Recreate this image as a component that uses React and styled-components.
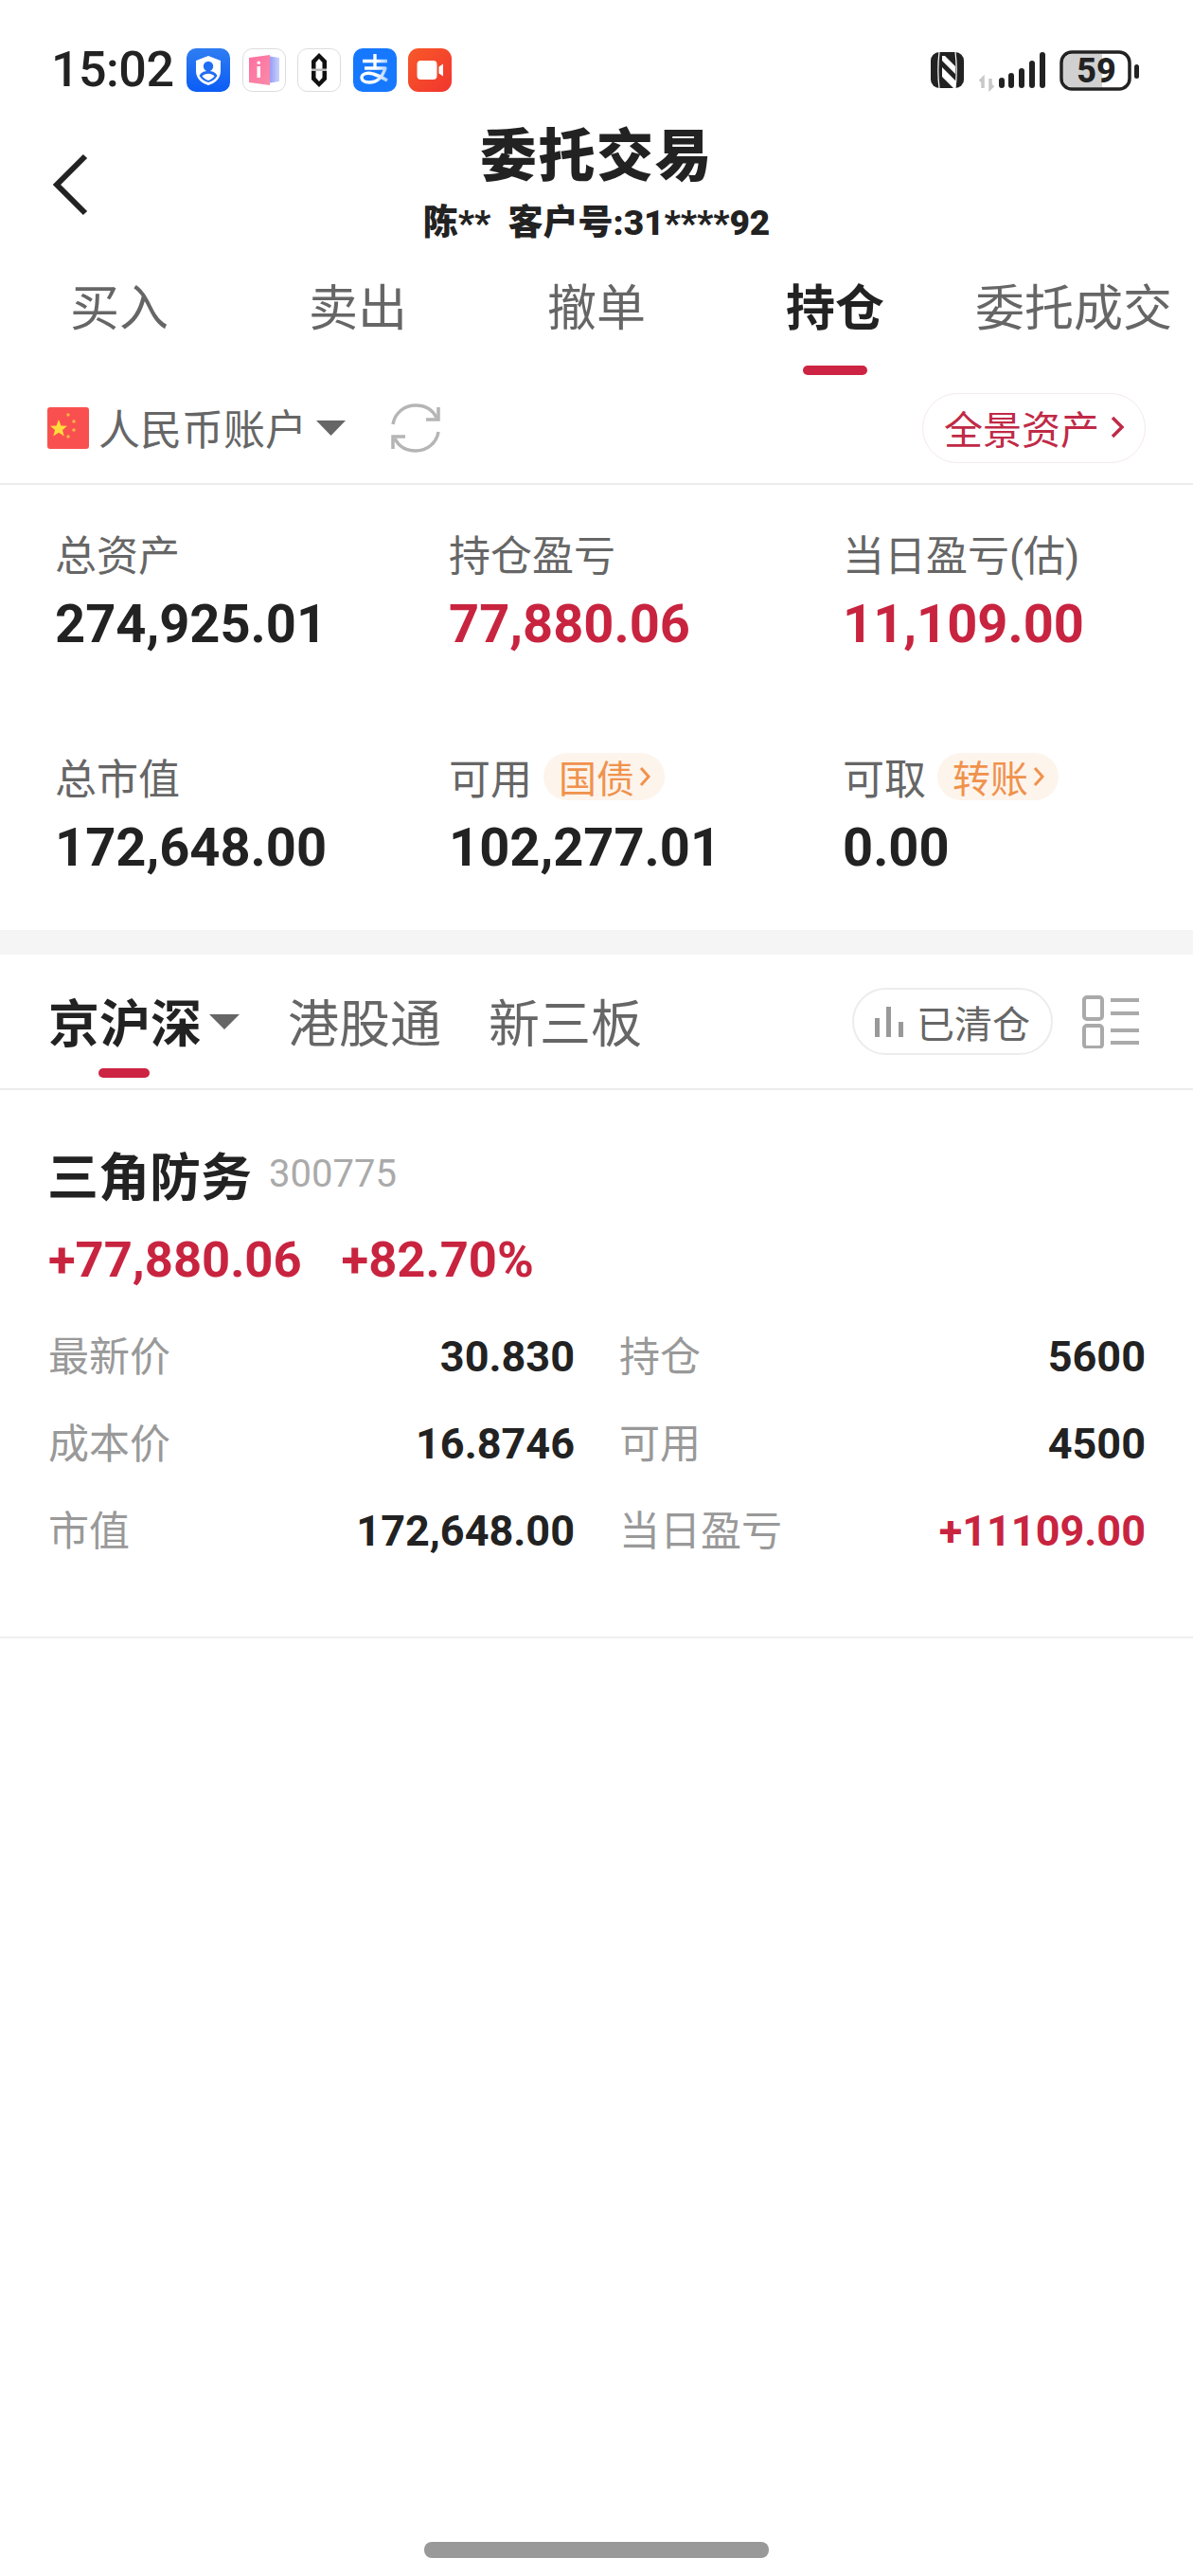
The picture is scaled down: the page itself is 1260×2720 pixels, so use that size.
import React from "react";
import styled, { createGlobalStyle } from "styled-components";

const RED = "#c8243f";
const CJK = `Roboto, "Noto Sans CJK SC", sans-serif`;

const GlobalStyle = createGlobalStyle`
  html, body {
    margin: 0;
    padding: 0;
    background: #fff;
  }
  body {
    font-family: ${CJK};
    color: #222;
  }
  * {
    box-sizing: border-box;
  }
`;

const Page = styled.div`
  width: 1260px;
  height: 2720px;
  display: flex;
  flex-direction: column;
  background: #fff;
  overflow: hidden;
`;

/* status bar */
const StatusBar = styled.div`
  height: 122px;
  padding: 50px 56px 0 54px;
  display: flex;
  align-items: flex-start;
  justify-content: space-between;
`;

const StatusLeft = styled.div`
  display: flex;
  align-items: center;
  height: 47px;
`;

const Time = styled.span`
  font-size: 52px;
  font-weight: 500;
  width: 143px;
  letter-spacing: -0.5px;
  color: #222;
`;

const AppIcons = styled.div`
  display: flex;
  gap: 12.5px;
`;

const AppIcon = styled.svg`
  width: 46px;
  height: 46px;
  display: block;
`;

const StatusGlyphs = styled.svg`
  display: block;
  width: 222px;
  height: 47px;
`;

/* title */
const NavBar = styled.div`
  height: 142px;
  position: relative;
  display: flex;
  flex-direction: column;
  align-items: center;
`;

const BackIcon = styled.svg`
  position: absolute;
  left: 54px;
  top: 40px;
  width: 42px;
  height: 66px;
`;

const Title = styled.div`
  font-size: 60px;
  line-height: 70px;
  margin-top: 9px;
  font-weight: 900;
  letter-spacing: 1.5px;
`;

const SubTitle = styled.div`
  font-size: 37px;
  line-height: 44px;
  margin-top: 13px;
  font-weight: 900;
  white-space: pre;
`;

/* top tabs */
const Tabs = styled.div`
  display: grid;
  grid-template-columns: repeat(5, 252px);
  height: 136px;
  padding-top: 26px;
`;

const Tab = styled.div`
  position: relative;
  text-align: center;
  white-space: nowrap;
  font-size: 52px;
  line-height: 74px;
  font-weight: ${(p) => (p.$active ? 700 : 400)};
  color: ${(p) => (p.$active ? "#222" : "#666")};
`;

const TabLine = styled.span`
  position: absolute;
  left: 50%;
  bottom: 4px;
  width: 68px;
  height: 10px;
  margin-left: -34px;
  border-radius: 5px;
  background: #cc2442;
`;

/* account row */
const AccountRow = styled.div`
  height: 112px;
  padding: 0 50px 6px 50px;
  display: flex;
  align-items: center;
  border-bottom: 2px solid #ececec;
`;

const Flag = styled.svg`
  width: 44px;
  height: 44px;
  margin-right: 10px;
  flex: none;
`;

const AccountName = styled.span`
  font-size: 44px;
  margin-bottom: 3px;
  color: #666;
`;

const Caret = styled.svg`
  display: block;
  width: ${(p) => p.$w}px;
  height: 16px;
  margin-left: ${(p) => p.$ml}px;
  flex: none;
`;

const RefreshIcon = styled.svg`
  width: 52px;
  height: 52px;
  margin-left: 48px;
`;

const AssetPill = styled.div`
  margin-left: auto;
  width: 236px;
  height: 74px;
  padding-bottom: 3px;
  display: flex;
  align-items: center;
  justify-content: center;
  gap: 12px;
  border: 1.5px solid #f5e9eb;
  border-radius: 37px;
  font-size: 41px;
  color: #c02a47;
`;

const Chevron = styled.svg`
  flex: none;
  display: block;
  fill: none;
  stroke: currentColor;
`;

/* stats */
const Stats = styled.div`
  display: grid;
  grid-template-columns: repeat(3, 416px);
  grid-auto-rows: 236px;
  padding: 33px 0 0 58px;
  height: 470px;
`;

const Stat = styled.div`
  display: flex;
  flex-direction: column;
`;

const StatLabel = styled.div`
  display: flex;
  align-items: center;
  height: 77px;
  font-size: 44px;
  color: #666;
`;

const StatValue = styled.div`
  font-size: 56px;
  line-height: 74px;
  font-weight: 700;
  color: ${(p) => (p.$red ? RED : "#222")};
`;

const Badge = styled.span`
  display: inline-flex;
  align-items: center;
  gap: 5px;
  height: 50px;
  margin-left: 12px;
  padding: 0 15px 0 16px;
  border-radius: 25px;
  background: #fdf4ec;
  color: #f0924c;
  font-size: 40px;
`;

const Band = styled.div`
  height: 26px;
  background: #f5f5f5;
  flex: none;
`;

/* market tabs */
const MarketBar = styled.div`
  height: 143px;
  padding: 0 57px 0 51px;
  display: flex;
  align-items: center;
  border-bottom: 2px solid #ececec;
`;

const MarketTab = styled.div`
  position: relative;
  font-size: 54px;
  margin-bottom: 3px;
  font-weight: ${(p) => (p.$active ? 700 : 400)};
  color: ${(p) => (p.$active ? "#222" : "#666")};
  margin-left: ${(p) => p.$ml || 0}px;
`;

const MarketLine = styled.span`
  position: absolute;
  left: 53px;
  top: 90px;
  width: 54px;
  height: 10px;
  border-radius: 5px;
  background: #cc2442;
`;

const ClearedPill = styled.div`
  margin-left: auto;
  width: 212px;
  height: 71px;
  display: flex;
  align-items: center;
  justify-content: center;
  gap: 14px;
  border: 2px solid #ececec;
  border-radius: 36px;
  font-size: 40px;
  color: #666;
`;

const ViewIcon = styled.svg`
  width: 60px;
  height: 56px;
  margin-left: 31px;
  flex: none;
`;

/* holding card */
const Card = styled.div`
  height: 579px;
  padding: 60px 50px 0 51px;
  border-bottom: 2px solid #f0f0f0;
`;

const CardHead = styled.div`
  display: flex;
  align-items: center;
  gap: 18px;
  height: 56px;
  margin-left: -1px;
`;

const StockName = styled.span`
  font-size: 54px;
  font-weight: 700;
`;

const StockCode = styled.span`
  font-size: 40px;
  color: #aaa;
`;

const Profit = styled.div`
  display: flex;
  gap: 42px;
  margin-top: 31px;
  font-size: 52.5px;
  line-height: 64px;
  font-weight: 700;
  color: ${RED};
`;

const Rows = styled.div`
  display: grid;
  grid-template-columns: 556px 556px;
  column-gap: 47px;
  margin-top: 24px;
`;

const Row = styled.div`
  display: flex;
  align-items: center;
  justify-content: space-between;
  height: 92px;
`;

const RowLabel = styled.span`
  font-size: 43px;
  margin-bottom: 7px;
  color: #999;
`;

const RowValue = styled.span`
  font-size: 45px;
  font-weight: 700;
  color: ${(p) => (p.$red ? RED : "#222")};
`;

const Spacer = styled.div`
  flex: 1;
`;

const HomeBar = styled.div`
  align-self: center;
  width: 364px;
  height: 17px;
  margin-bottom: 19px;
  border-radius: 8px;
  background: #999;
`;

const Shield = () => (
  <AppIcon viewBox="0 0 46 46">
    <defs>
      <linearGradient id="shieldBg" x1="0" y1="0" x2="0" y2="1">
        <stop offset="0" stopColor="#2f7df2" />
        <stop offset="1" stopColor="#0b5cf5" />
      </linearGradient>
    </defs>
    <rect width="46" height="46" rx="10" fill="url(#shieldBg)" />
    <path d="M23 8l13 5v11c0 8-6 13-13 15-7-2-13-7-13-15V13z" fill="#fff" />
    <circle cx="23" cy="19" r="5.2" fill="#1f6df3" />
    <path d="M13.5 29c2-4 5.5-5 9.5-5s7.5 1 9.5 5c-2.5 4-6 6-9.5 7-3.5-1-7-3-9.5-7z" fill="#1f6df3" />
    <path d="M16.5 29.5c1.5-2 4-2.8 6.5-2.8s5 .8 6.5 2.8c-1.8 2.3-4 3.7-6.5 4.5-2.5-.8-4.7-2.2-6.5-4.5z" fill="#fff" />
  </AppIcon>
);

const BookApp = () => (
  <AppIcon viewBox="0 0 46 46">
    <defs>
      <linearGradient id="bookBg" x1="0" y1="0" x2="1" y2="1">
        <stop offset="0" stopColor="#ff6fa0" />
        <stop offset="1" stopColor="#f98ba8" />
      </linearGradient>
      <linearGradient id="bookBack" x1="0" y1="0" x2="1" y2="0">
        <stop offset="0" stopColor="#8c8cf5" />
        <stop offset="1" stopColor="#c7d3fb" />
      </linearGradient>
    </defs>
    <rect x=".5" y=".5" width="45" height="45" rx="10" fill="#fff" stroke="#dcdcdc" />
    <path d="M26 8l13 2v25l-13 2z" fill="url(#bookBack)" />
    <path d="M7 10l22-3v32l-22-3z" fill="url(#bookBg)" />
    <rect x="15.5" y="19" width="3.5" height="12" fill="#fff" />
    <rect x="15.5" y="13.5" width="3.5" height="3.5" rx="1.7" fill="#fff" />
  </AppIcon>
);

const ChainApp = () => (
  <AppIcon viewBox="0 0 46 46">
    <rect x=".5" y=".5" width="45" height="45" rx="10" fill="#fff" stroke="#dcdcdc" />
    <path d="M23 5l8 8v20l-8 8-8-8V13z" fill="#111" />
    <path d="M23 11l3.5 4v16L23 35l-3.5-4V15z" fill="#fff" />
    <rect x="15" y="21.5" width="16" height="2.5" fill="#bbb" />
  </AppIcon>
);

const AlipayApp = () => (
  <AppIcon viewBox="0 0 46 46">
    <defs>
      <linearGradient id="payTail" x1="0" y1="0" x2="1" y2="0">
        <stop offset="0.55" stopColor="#fff" />
        <stop offset="1" stopColor="#a8cdff" />
      </linearGradient>
    </defs>
    <rect width="46" height="46" rx="10" fill="#1678ff" />
    <path d="M10 13.5h26M23 6v14M12 21h22c-3 9-9 15-17 15-5 0-8-2-8-5 0-4 6-6 12-4 5 1.5 10 4 15 7"
      fill="none" stroke="url(#payTail)" strokeWidth="3.4" strokeLinejoin="round" />
  </AppIcon>
);

const VideoApp = () => (
  <AppIcon viewBox="0 0 46 46">
    <defs>
      <linearGradient id="videoBg" x1="0" y1="0" x2="1" y2="1">
        <stop offset="0" stopColor="#f7592a" />
        <stop offset="1" stopColor="#f2352e" />
      </linearGradient>
    </defs>
    <rect width="46" height="46" rx="11" fill="url(#videoBg)" />
    <rect x="9.5" y="13" width="21" height="20" rx="4" fill="#fff" />
    <path d="M32.5 19.5l4.5-3v13l-4.5-3z" fill="#fff" />
  </AppIcon>
);

const StatusIcons = () => (
  <StatusGlyphs viewBox="0 0 222 47">
    {/* nfc */}
    <rect x="1" y="5" width="35" height="38" rx="9" fill="#222" />
    <path d="M10 5c-1.5 12-1.5 26 0 38M27 5c1.500 12 1.500 26 0 38" fill="none" stroke="#fff" strokeWidth="1.2" />
    <path d="M13 9h3l11 11v8L13 14zM13 21l14 14v8h-2L13 31z" fill="#fff" />
    {/* data arrows */}
    <path d="M56 43V33l-3 3M64 33v10l3-3" fill="none" stroke="#c8c8c8" strokeWidth="3.5" />
    {/* signal */}
    <g stroke="#222" strokeWidth="6" strokeLinecap="round">
      <path d="M76 35v5M86 30v10M97 25v15M108 17v23M119 8v32" />
    </g>
    {/* battery */}
    <rect x="139" y="5" width="72" height="39" rx="11" fill="#fff" stroke="#222" strokeWidth="3.5" />
    <path d="M141 16a9 9 0 0 1 9-9h32v35h-32a9 9 0 0 1-9-9z" fill="#d0d0d0" />
    <rect x="216" y="18" width="5" height="15" rx="2.5" fill="#222" />
    <text x="176" y="37" textAnchor="middle" fontSize="36" fontWeight="800" fill="#222" fontFamily="Roboto, sans-serif">59</text>
  </StatusGlyphs>
);

const ChevronRight = ({ w = 14, h = 24, sw = 3.5 }) => (
  <Chevron width={w} height={h} viewBox={`0 0 ${w} ${h}`} strokeWidth={sw}>
    <path d={`M2 2l${w - 4} ${h / 2 - 2}L2 ${h - 2}`} />
  </Chevron>
);

const stats = [
  { label: "总资产", value: "274,925.01" },
  { label: "持仓盈亏", value: "77,880.06", red: true },
  { label: "当日盈亏(估)", value: "11,109.00", red: true },
  { label: "总市值", value: "172,648.00" },
  { label: "可用", badge: "国债", value: "102,277.01" },
  { label: "可取", badge: "转账", value: "0.00" },
];

const rows = [
  ["最新价", "30.830", "持仓", "5600"],
  ["成本价", "16.8746", "可用", "4500"],
  ["市值", "172,648.00", "当日盈亏", "+11109.00"],
];

export default function App() {
  return (
    <Page>
      <GlobalStyle />
      <StatusBar>
        <StatusLeft>
          <Time>15:02</Time>
          <AppIcons>
            <Shield />
            <BookApp />
            <ChainApp />
            <AlipayApp />
            <VideoApp />
          </AppIcons>
        </StatusLeft>
        <StatusIcons />
      </StatusBar>

      <NavBar>
        <BackIcon viewBox="0 0 42 66" fill="none">
          <path d="M36 3L6 33l30 30" stroke="#222" strokeWidth="6" />
        </BackIcon>
        <Title>委托交易</Title>
        <SubTitle>陈**  客户号:31****92</SubTitle>
      </NavBar>

      <Tabs>
        {["买入", "卖出", "撤单", "持仓", "委托成交"].map((t) => (
          <Tab key={t} $active={t === "持仓"}>
            {t}
            {t === "持仓" && <TabLine />}
          </Tab>
        ))}
      </Tabs>

      <AccountRow>
        <Flag viewBox="0 0 44 44">
          <rect width="44" height="44" rx="3" fill="#f9504f" />
          <path d="M12 13l2.5 6.5 6.5.3-5 4.2 1.7 6.5-5.7-3.700-5.700 3.700 1.700-6.500-5-4.200 6.500-.3z" fill="#ffdc3c" />
          <circle cx="22" cy="8" r="1.8" fill="#f5b14a" />
          <circle cx="28" cy="15" r="1.8" fill="#f5b14a" />
          <circle cx="28" cy="24" r="1.8" fill="#f5b14a" />
          <circle cx="22" cy="31" r="1.8" fill="#f5b14a" />
        </Flag>
        <AccountName>人民币账户</AccountName>
        <Caret $w={31} $ml={10} viewBox="0 0 31 16">
          <path d="M0 0h31L15.5 16z" fill="#666" />
        </Caret>
        <RefreshIcon viewBox="0 0 52 52" fill="none" stroke="#b5b5b5" strokeWidth="3.5">
          <path d="M2 22C4 10 14 2 26 2c10 0 18 5 22 13" />
          <path d="M50 4v13H37" />
          <path d="M50 30c-2 12-12 20-24 20-10 0-18-5-22-13" />
          <path d="M2 48V35h13" />
        </RefreshIcon>
        <AssetPill>
          全景资产
          <ChevronRight />
        </AssetPill>
      </AccountRow>

      <Stats>
        {stats.map((s) => (
          <Stat key={s.label}>
            <StatLabel>
              {s.label}
              {s.badge && (
                <Badge>
                  {s.badge}
                  <ChevronRight w={12} h={22} sw={3} />
                </Badge>
              )}
            </StatLabel>
            <StatValue $red={s.red}>{s.value}</StatValue>
          </Stat>
        ))}
      </Stats>
      <Band />

      <MarketBar>
        <MarketTab $active>
          京沪深
          <MarketLine />
        </MarketTab>
        <Caret $w={32} $ml={8} viewBox="0 0 32 16">
          <path d="M0 0h32L16 16z" fill="#666" />
        </Caret>
        <MarketTab $ml={51}>港股通</MarketTab>
        <MarketTab $ml={50}>新三板</MarketTab>
        <ClearedPill>
          <svg width="30" height="32" viewBox="0 0 30 32">
            <path d="M0 12h5v20H0zM12 0h5v32h-5zM25 16h5v16h-5z" fill="#999" />
          </svg>
          已清仓
        </ClearedPill>
        <ViewIcon viewBox="0 0 60 56" fill="none" stroke="#aaa">
          <rect x="2" y="2" width="19" height="23" rx="3" strokeWidth="4" />
          <rect x="2" y="32" width="19" height="23" rx="3" strokeWidth="4" />
          <path d="M30 5h30M30 19h30M30 37h30M30 50h30" strokeWidth="4" />
        </ViewIcon>
      </MarketBar>

      <Card>
        <CardHead>
          <StockName>三角防务</StockName>
          <StockCode>300775</StockCode>
        </CardHead>
        <Profit>
          <span>+77,880.06</span>
          <span>+82.70%</span>
        </Profit>
        <Rows>
          {rows.map((r) => (
            <React.Fragment key={r[0]}>
              <Row>
                <RowLabel>{r[0]}</RowLabel>
                <RowValue>{r[1]}</RowValue>
              </Row>
              <Row>
                <RowLabel>{r[2]}</RowLabel>
                <RowValue $red={r[3].startsWith("+")}>{r[3]}</RowValue>
              </Row>
            </React.Fragment>
          ))}
        </Rows>
      </Card>

      <Spacer />
      <HomeBar />
    </Page>
  );
}
